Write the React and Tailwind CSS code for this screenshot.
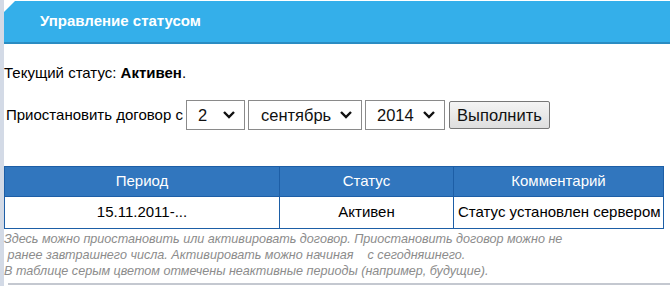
const font = { fontFamily: '"Liberation Sans", Arial, sans-serif' };

function Chevron() {
  return (
    <svg width="14" height="10" viewBox="0 0 14 10" className="shrink-0">
      <path d="M2 2 L7 7 L12 2" fill="none" stroke="#111" strokeWidth="2.4" />
    </svg>
  );
}

function FakeSelect({ value, className }) {
  return (
    <div
      className={`h-[30px] border border-[#8a8a8a] bg-white flex items-center justify-between text-[16.5px] text-[#111] ${className}`}
    >
      <span>{value}</span>
      <Chevron />
    </div>
  );
}

export default function App() {
  const rows = [
    { period: "15.11.2011-...", status: "Активен", comment: "Статус установлен сервером" },
  ];

  return (
    <div className="w-[670px] h-[286px] flex bg-white overflow-hidden" style={font}>
      {/* left strip */}
      <div className="w-[4px] shrink-0 bg-[#d3dae6]" />

      <div className="flex-1 flex flex-col">
        {/* Header */}
        <div className="mt-[1px] h-[43px] bg-[#34afea] border-b-2 border-[#2a8cc2] flex items-center pl-[36px] [clip-path:polygon(11px_0,100%_0,100%_100%,0_100%,0_11px)]">
          <h2 className="text-white font-bold text-[15px]">Управление статусом</h2>
        </div>

        <div className="mt-[21px] text-[15px] text-black leading-4">
          Текущий статус: <b>Активен</b>.
        </div>

        {/* Suspend form */}
        <div className="mt-[19px] flex items-center text-[15px] text-black">
          <span className="ml-[2px] mr-[3px]">Приостановить договор с</span>
          <FakeSelect value="2" className="w-[59px] pl-[11px] pr-[8px]" />
          <FakeSelect value="сентябрь" className="ml-[3px] w-[114px] pl-[12px] pr-[8px]" />
          <FakeSelect value="2014" className="ml-[3px] w-[80px] pl-[11px] pr-[8px]" />
          <button className="ml-[4px] h-[28px] w-[101px] border border-[#777] rounded-[2px] bg-gradient-to-b from-[#f4f4f4] to-[#dedede] text-[16.5px] text-[#111]">
            Выполнить
          </button>
        </div>

        {/* Table */}
        <table className="mt-[36px] w-[660px] border-collapse text-[15px] table-fixed">
          <thead>
            <tr className="bg-[#3176be] text-white">
              <th className="h-[30px] w-[275px] border border-[#1d5ea6] font-normal">Период</th>
              <th className="w-[174px] border border-[#1d5ea6] font-normal">Статус</th>
              <th className="border border-[#1d5ea6] font-normal">Комментарий</th>
            </tr>
          </thead>
          <tbody>
            {rows.map((r, i) => (
              <tr key={i} className="text-black">
                <td className="h-[32px] border border-[#1d5ea6] text-center">{r.period}</td>
                <td className="border border-[#1d5ea6] text-center">{r.status}</td>
                <td className="border border-[#1d5ea6] text-left pl-[4px] whitespace-nowrap">{r.comment}</td>
              </tr>
            ))}
          </tbody>
        </table>

        {/* Notes */}
        <div className="mt-[2px] text-[12.6px] italic text-[#8c8c8c] leading-[16px] whitespace-pre">
          <div>Здесь можно приостановить или активировать договор. Приостановить договор можно не</div>
          <div> ранее завтрашнего числа. Активировать можно начиная    с сегодняшнего.</div>
          <div>В таблице серым цветом отмечены неактивные периоды (например, будущие).</div>
        </div>

        <div className="mt-[4px] ml-[4px] h-[2px] bg-[#c4c8d0]" />
      </div>
    </div>
  );
}
